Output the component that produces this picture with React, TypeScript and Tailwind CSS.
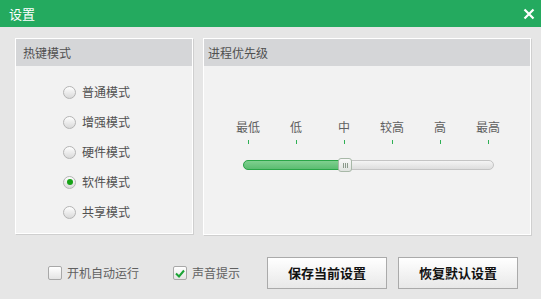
import React from "react";

const font = { fontFamily: '"Noto Sans CJK SC", "Noto Sans", sans-serif' };

function Radio({ label, checked }: { label: string; checked?: boolean }) {
  return (
    <div className="flex items-center h-[30px]">
      <span className="w-[13px] h-[13px] rounded-full border border-[#b4b4b4] bg-gradient-to-b from-[#ffffff] to-[#d9d9d9] flex items-center justify-center">
        {checked && <span className="w-[6px] h-[6px] rounded-full bg-[#16a216]" />}
      </span>
      <span className="ml-[6px] text-[12px] text-[#505050] leading-none">{label}</span>
    </div>
  );
}

function Checkbox({ label, checked }: { label: string; checked?: boolean }) {
  return (
    <div className="flex items-center">
      <span className="w-[14px] h-[14px] rounded-[2px] border border-[#a8a8a8] bg-gradient-to-b from-[#ffffff] to-[#e4e4e4] flex items-center justify-center">
        {checked && (
          <svg width="10" height="9" viewBox="0 0 10 9">
            <path d="M1 4.5 L4 7.5 L9 1.5" fill="none" stroke="#1aa335" strokeWidth="2" />
          </svg>
        )}
      </span>
      <span className="ml-[5px] text-[12px] text-[#606060] leading-none">{label}</span>
    </div>
  );
}

const levels = ["最低", "低", "中", "较高", "高", "最高"];

export default function App() {
  return (
    <div className="w-[541px] h-[299px] bg-[#e6e6e6] flex flex-col overflow-hidden" style={font}>
      <div className="h-[27px] bg-[#24aa5f] flex items-center justify-between pl-[9px] pr-[5px]">
        <span className="text-white text-[13px] leading-none">设置</span>
        <svg width="12" height="12" viewBox="0 0 12 12" className="mr-[1px]">
          <path d="M1.5 1.5 L10.5 10.5 M10.5 1.5 L1.5 10.5" stroke="#ffffff" strokeWidth="2.2" />
        </svg>
      </div>
      <div className="flex gap-[10px] pl-[15px] pt-[11px]">
        <div className="w-[178px] h-[196px] border border-white shadow-[1px_1px_0_#cfcfcf] bg-[#f2f2f2] flex flex-col">
          <div className="h-[27px] bg-[#d5d6d8] flex items-center pl-[7px] text-[12px] text-[#505050]">热键模式</div>
          <div className="flex flex-col pl-[47px] pt-[11px]">
            <Radio label="普通模式" />
            <Radio label="增强模式" />
            <Radio label="硬件模式" />
            <Radio label="软件模式" checked />
            <Radio label="共享模式" />
          </div>
        </div>
        <div className="w-[328px] h-[197px] border border-white shadow-[1px_1px_0_#cfcfcf] bg-[#f2f2f2] flex flex-col">
          <div className="h-[27px] bg-[#d5d6d8] flex items-center pl-[4px] text-[12px] text-[#505050]">进程优先级</div>
          <div className="flex flex-col pt-[55px]">
            <div className="flex pl-[20px]">
              {levels.map((l) => (
                <div key={l} className="w-[48px] flex flex-col items-center">
                  <span className="text-[12px] text-[#606060] leading-none h-[13px]">{l}</span>
                  <span className="mt-[6px] w-[1px] h-[4px] bg-[#2fb055]" />
                </div>
              ))}
            </div>
            <div className="relative mt-[16px] ml-[39px] w-[251px] h-[10px] rounded-full border border-[#c4c4c4] bg-gradient-to-b from-[#f4f4f4] to-[#dedede]">
              <div className="absolute left-[-1px] top-[-1px] h-[10px] w-[102px] rounded-l-full border border-[#2aa648] bg-gradient-to-b from-[#7fd08f] to-[#5bbd71]" />
              <div className="absolute left-[94px] top-[-3px] w-[14px] h-[14px] rounded-[3px] border border-[#a8b8a8] bg-gradient-to-b from-[#f8f8f8] to-[#dfe3df] flex items-center justify-center gap-[1px]">
                <span className="w-[1px] h-[5px] bg-[#8a9a8a]" />
                <span className="w-[1px] h-[5px] bg-[#8a9a8a]" />
                <span className="w-[1px] h-[5px] bg-[#8a9a8a]" />
              </div>
            </div>
          </div>
        </div>
      </div>
      <div className="flex items-center pl-[48px] pt-[22px]">
        <Checkbox label="开机自动运行" />
        <div className="ml-[34px]">
          <Checkbox label="声音提示" checked />
        </div>
        <button className="ml-[27px] w-[120px] h-[32px] border border-[#aaaaaa] bg-gradient-to-b from-[#ffffff] to-[#e8e8e8] text-[13px] font-bold text-[#111]">保存当前设置</button>
        <button className="ml-[11px] w-[120px] h-[32px] border border-[#aaaaaa] bg-gradient-to-b from-[#ffffff] to-[#e8e8e8] text-[13px] font-bold text-[#111]">恢复默认设置</button>
      </div>
    </div>
  );
}
